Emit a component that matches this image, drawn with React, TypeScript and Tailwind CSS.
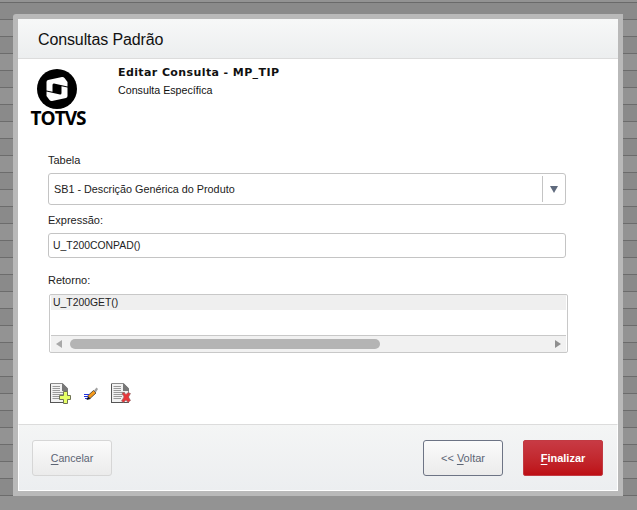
import React from "react";

const rows = Array.from({ length: 29 });

function DocBase() {
  return (
    <>
      <path d="M1.5 0.5H13.5L18.5 5.5V19.5H1.5Z" fill="#f2f2f2" stroke="#8c8c8c" />
      <path d="M1 20H19V19H2V1H1Z" fill="#555" />
      <path d="M13 0.5H14L19 5.5V8H13Z" fill="#777" />
      <path d="M3.5 3.5H11M3.5 5.5H11M3.5 7.5H11M3.5 9.5H15M3.5 11.5H15M3.5 13.5H12M3.5 15.5H11" stroke="#9a9a9a" />
    </>
  );
}

function AddIcon() {
  return (
    <svg width="22" height="22" viewBox="0 0 22 22" className="shrink-0">
      <DocBase />
      <path d="M14.5 8.5H18.5V12.5H21.5V16.5H18.5V20.5H14.5V16.5H10.5V12.5H14.5Z" fill="#e6ff66" stroke="#6f7355" />
    </svg>
  );
}

function DelIcon() {
  return (
    <svg width="22" height="22" viewBox="0 0 22 22" className="shrink-0">
      <DocBase />
      <path d="M12 10L14 9.5L16 11.5L18 9.5L20.5 10.5L18.5 14L20.5 17.5L18 19.5L16 17L13.5 19.5L11.5 18L14 14Z" fill="#e8363a" stroke="#8b6a6a" strokeWidth="0.6" />
    </svg>
  );
}

function PencilIcon() {
  return (
    <svg width="14" height="14" viewBox="0 0 14 14" className="shrink-0">
      <path d="M3.5 9L9.5 3.5L12 6L6 11.5Z" fill="#f59a1c" stroke="#222" strokeWidth="0.7" />
      <path d="M10 3.5L12.5 0.5L14 2L11.8 5.5Z" fill="#a0a0a0" />
      <path d="M0 7.5H5M0 9.5H4M1 11.5H4" stroke="#1d2ee0" strokeWidth="1" />
      <path d="M2.5 13L4 9.5L6.5 12Z" fill="#111" />
    </svg>
  );
}

function Logo() {
  return (
    <svg width="40" height="40" viewBox="0 0 40 40" className="shrink-0">
      <circle cx="20" cy="20" r="20" fill="#000" />
      <path d="M9.5 13Q9.5 11.5 11 11L25 8Q26.5 7.8 27.5 9L30.5 13V17.5L17 14.5Q15.5 14.3 15.5 16V22.8L9.5 21.5Z" fill="#fff" />
      <path d="M30.5 27Q30.5 28.5 29 29L15 32Q13.5 32.2 12.5 31L9.5 27V22.5L23 25.5Q24.5 25.7 24.5 24V17.2L30.5 18.5Z" fill="#fff" />
    </svg>
  );
}

function Key({ children }: { children: React.ReactNode }) {
  return <span className="underline underline-offset-2">{children}</span>;
}

export default function App() {
  return (
    <div className="relative h-[510px] w-[637px] overflow-hidden bg-[#939393] font-['Liberation_Sans',Arial,sans-serif] text-[11px] text-[#222]">
      <div className="flex flex-col pt-[3px]">
        <div className="absolute left-0 top-0 h-[3px] w-full border-b border-[#6a6a6a]" />
        {rows.map((_, i) => (
          <div key={i} className={`h-[17px] border-b border-[#6c6c6c] ${i % 2 === 0 ? "bg-[#8a8a8a]" : "bg-[#939393]"}`} />
        ))}
      </div>

      <div className="absolute left-[13px] top-[14px] h-[482px] w-[610px] rounded-tl-[3px] border-[5px] border-[#b9b9b9]">
        <div className="flex h-full flex-col bg-white">
          <header className="flex h-[40px] items-center border-b border-[#dcdcdc] bg-gradient-to-b from-[#f7f8f8] to-[#eceeef] pl-[20px] pt-[2px] text-[16px] tracking-[-0.12px] text-[#111]">
            Consultas Padrão
          </header>

          <main className="flex-1">
            <div className="flex h-[85px]">
              <div className="flex w-[80px] flex-col items-center pt-[10px]">
                <div className="ml-[-2px]"><Logo /></div>
                <span className="mt-[-4px] font-['Open_Sans',sans-serif] text-[19px] font-bold leading-[26px] tracking-[-1px] text-black">TOTVS</span>
              </div>
              <div className="pl-[20px] pt-[7px]">
                <div className="font-['DejaVu_Sans',sans-serif] text-[11px] font-bold leading-[14px] tracking-[0.4px] text-[#111]">Editar Consulta - MP_TIP</div>
                <div className="mt-[3px] text-[10.7px] leading-[14px] text-[#111]">Consulta Específica</div>
              </div>
            </div>

            <div className="ml-[30px] w-[518px]">
              <label className="block pt-[10px] leading-[13px]">Tabela</label>
              <div className="mt-[6px] flex h-[32px] items-center rounded-[3px] border border-[#c4c4c4] pl-[5px]">
                <span className="flex-1 text-[10.8px]">SB1 - Descrição Genérica do Produto</span>
                <div className="flex h-[26px] w-[23px] items-center justify-center border-l border-[#c4c4c4]">
                  <svg width="8" height="7" viewBox="0 0 8 7"><path d="M0 0H8L4 7Z" fill="#5f6a7d" /></svg>
                </div>
              </div>

              <label className="mt-[9px] block leading-[13px]">Expressão:</label>
              <div className="mt-[6px] flex h-[25px] items-center rounded-[3px] border border-[#c4c4c4] pl-[4px] text-[10.4px]">U_T200CONPAD()</div>

              <label className="mt-[16px] block leading-[13px]">Retorno:</label>
              <div className="ml-[1px] mt-[7px] flex h-[59px] w-[519px] flex-col rounded-[2px] border border-[#c8c8c8] px-[1px]">
                <div className="flex h-[15px] items-center bg-[#efefef] pl-[2px] text-[10.4px]">U_T200GET()</div>
                <div className="flex-1" />
                <div className="flex h-[17px] items-center border-t border-[#c8c8c8] bg-[#f1f1f1] px-[5px]">
                  <svg width="6" height="8" viewBox="0 0 6 8" className="shrink-0"><path d="M6 0V8L0 4Z" fill="#a8a8a8" /></svg>
                  <div className="ml-[8px] h-[10px] w-[310px] rounded-[5px] bg-[#b4b4b4]" />
                  <div className="flex-1" />
                  <svg width="6" height="8" viewBox="0 0 6 8" className="shrink-0"><path d="M0 0V8L6 4Z" fill="#8f8f8f" /></svg>
                </div>
              </div>

              <div className="ml-[1px] mt-[30px] flex items-center">
                <AddIcon />
                <div className="ml-[13px]"><PencilIcon /></div>
                <div className="ml-[12px]"><DelIcon /></div>
              </div>
            </div>
          </main>

          <footer className="flex h-[67px] items-center justify-between border-x border-b border-t border-x-white border-b-white border-t-[#dcdcdc] bg-gradient-to-b from-[#f4f5f5] to-[#eceef0] pl-[13px] pr-[14px] text-[11px]">
            <button className="h-[36px] w-[80px] rounded-[3px] border border-[#d6d6d6] bg-gradient-to-b from-[#fbfbfb] to-[#ebebeb] pt-[2px] text-[10.6px] text-[#5c6474]">
              <Key>C</Key>ancelar
            </button>
            <div className="flex gap-[20px]">
              <button className="h-[36px] w-[80px] rounded-[3px] border border-[#6d7485] bg-gradient-to-b from-[#fbfbfb] to-[#ebebeb] pt-[1px] text-[#5c6474]">
                &lt;&lt; <Key>V</Key>oltar
              </button>
              <button className="h-[36px] w-[80px] rounded-[2px] border border-[#c23a42] bg-gradient-to-b from-[#c83a44] to-[#bd0e14] pt-[1px] font-bold text-white">
                <Key>F</Key>inalizar
              </button>
            </div>
          </footer>
        </div>
      </div>
    </div>
  );
}
